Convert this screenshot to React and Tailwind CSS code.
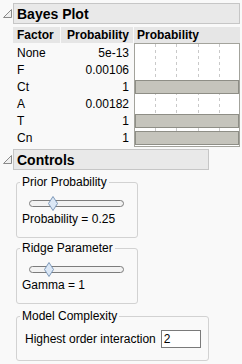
export default function App() {
  const rows = [
    { f: "None", p: "5e-13", bar: false },
    { f: "F", p: "0.00106", bar: false },
    { f: "Ct", p: "1", bar: true },
    { f: "A", p: "0.00182", bar: false },
    { f: "T", p: "1", bar: true },
    { f: "Cn", p: "1", bar: true },
  ];

  return (
    <div className="w-[242px] h-[364px] overflow-hidden bg-[#f9f9f9] text-[12px] leading-[14px] text-black font-['Liberation_Sans',Arial,sans-serif]">
      {/* Bayes Plot */}
      <div className="flex items-center mt-[3px]">
        <Disclosure />
        <div className="w-[227px] h-[21px] border border-[#c6c6c6] bg-[#e9e9e9] pl-[3px] flex items-center text-[14px] font-bold">
          Bayes Plot
        </div>
      </div>

      <div className="ml-[13px] mt-[3px]">
        <div className="flex gap-x-[1px] h-[16px] font-bold">
          <div className="w-[47px] bg-[#e6e6e6] pl-[4px] flex items-center">Factor</div>
          <div className="w-[72px] bg-[#e6e6e6] pr-[4px] flex items-center justify-end">Probability</div>
          <div className="w-[106px] bg-[#e6e6e6] pl-[3px] flex items-center">Probability</div>
        </div>

        <div className="flex gap-x-[1px]">
          <div className="w-[47px] pt-[1px]">
            {rows.map((r) => (
              <div key={r.f} className="h-[17px] pl-[4px] flex items-center">{r.f}</div>
            ))}
          </div>
          <div className="w-[72px] pt-[1px]">
            {rows.map((r) => (
              <div key={r.f} className="h-[17px] pr-[4px] flex items-center justify-end">{r.p}</div>
            ))}
          </div>
          <div className="relative w-[106px] border border-[#a3a39c] bg-white">
            <svg className="absolute inset-0" width="104" height="102">
              {[20.5, 41.5, 63.5, 84.5].map((x) => (
                <line key={x} x1={x} y1="0" x2={x} y2="102" stroke="#c9c9c9" strokeDasharray="3 3" />
              ))}
            </svg>
            {rows.map((r) => (
              <div key={r.f} className="relative h-[17px] pt-[2px] pb-[1px]">
                {r.bar && <div className="h-[14px] border border-[#8e8e86] bg-[#c5c4bc]" />}
              </div>
            ))}
          </div>
        </div>
      </div>

      {/* Controls */}
      <div className="flex items-center mt-[2px]">
        <Disclosure />
        <div className="w-[196px] h-[21px] border border-[#c6c6c6] bg-[#e9e9e9] pl-[3px] flex items-center text-[14px] font-bold">
          Controls
        </div>
      </div>

      <div className="ml-[16px] mt-[5px]">
        <fieldset className="w-[122px] border border-[#d2d2d2] rounded-[3px] pb-[11px]">
          <legend className="ml-[3px] px-[2px] leading-[14px]">Prior Probability</legend>
          <div className="mt-[7px] ml-[12px] relative h-[15px] w-[95px]">
            <div className="absolute left-0 right-0 top-[4px] h-[7px] rounded-full border border-[#7c7c7c] bg-[#f2f2f2]" />
            <Thumb className="left-[19px]" />
          </div>
          <div className="mt-[1px] ml-[5px]">Probability = 0.25</div>
        </fieldset>

        <fieldset className="mt-[3px] w-[122px] border border-[#d2d2d2] rounded-[3px] pb-[11px]">
          <legend className="ml-[3px] px-[2px] leading-[14px]">Ridge Parameter</legend>
          <div className="mt-[7px] ml-[12px] relative h-[15px] w-[95px]">
            <div className="absolute left-0 right-0 top-[4px] h-[7px] rounded-full border border-[#7c7c7c] bg-[#f2f2f2]" />
            <Thumb className="left-[15px]" />
          </div>
          <div className="mt-[1px] ml-[5px]">Gamma = 1</div>
        </fieldset>

        <fieldset className="mt-[5px] w-[193px] border border-[#d2d2d2] rounded-[3px] pb-[12px]">
          <legend className="ml-[3px] px-[2px] leading-[14px]">Model Complexity</legend>
          <div className="mt-[7px] ml-[8px] flex items-center h-[18px] gap-x-[5px]">
            <span>Highest order interaction</span>
            <div className="w-[40px] h-[18px] border border-[#7a7a7a] bg-white pl-[2px] flex items-center">2</div>
          </div>
        </fieldset>
      </div>
    </div>
  );
}

function Disclosure() {
  return (
    <div className="w-[13px] h-[21px] flex items-center pl-[3px]">
      <svg width="9" height="9" viewBox="0 0 9 9">
        <polygon points="0.5,8.5 8.5,0.5 8.5,8.5" fill="#f0f0f0" stroke="#8a8a8a" strokeWidth="1" />
      </svg>
    </div>
  );
}

function Thumb({ className }) {
  return (
    <svg className={`absolute top-0 ${className}`} width="10" height="15" viewBox="0 0 10 15">
      <polygon points="5,0.5 9.5,7.5 5,14.5 0.5,7.5" fill="#dbe7f5" stroke="#7d98b8" strokeWidth="1" />
    </svg>
  );
}
